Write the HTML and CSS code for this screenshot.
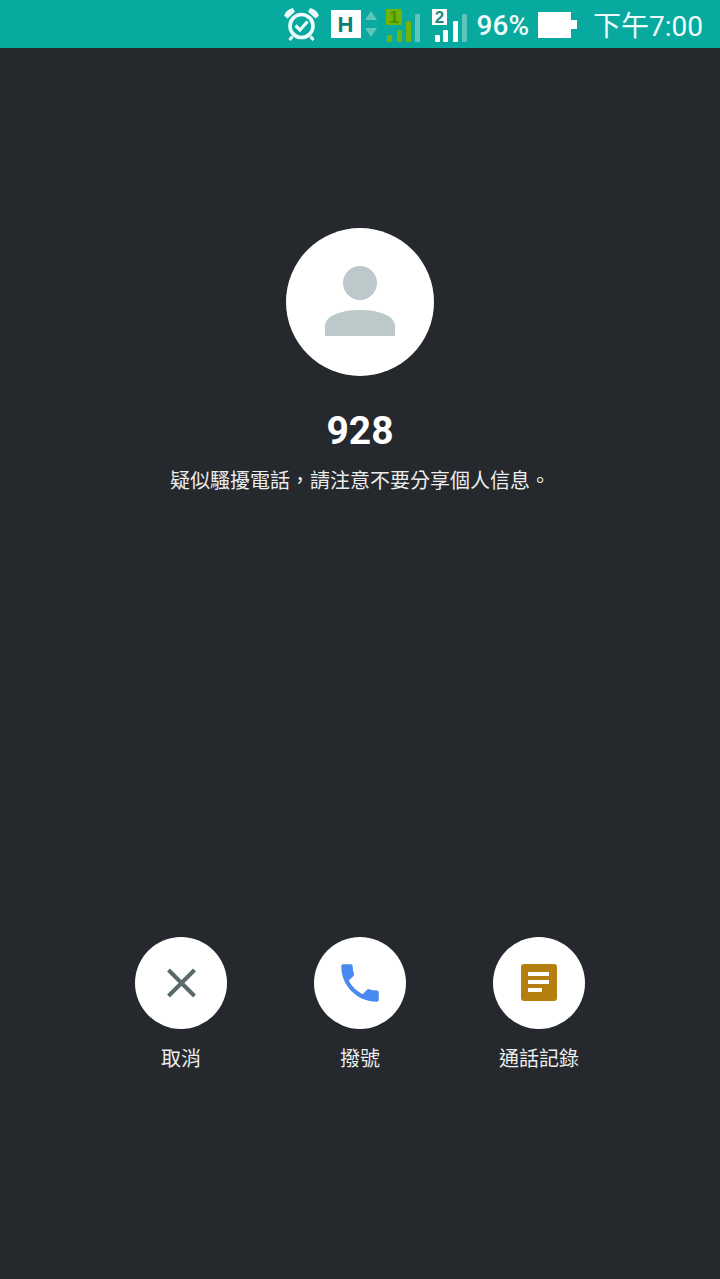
FILE: index.html
```html
<!DOCTYPE html>
<html lang="zh-Hant">
<head>
    <meta charset="UTF-8">
    <meta name="viewport" content="width=device-width, initial-scale=1.0">
    <title>疑似騷擾電話</title>
    <link rel="stylesheet" href="styles.css">
</head>
<body>
    <header class="status-bar">
        <svg class="icon-alarm" width="36" height="36" viewBox="0 0 36 36">
            <circle cx="18.500" cy="20" r="11.500" fill="none" stroke="#eefcfb" stroke-width="3.600"/>
            <path d="M2 9.500C3 6.500 6 4 9.500 3L11 5.500 4.500 11.500Z M35 9.500C34 6.500 31 4 27.500 3L26 5.500 32.500 11.500Z" fill="#eefcfb" stroke="#eefcfb" stroke-width="1.500"/>
            <path d="M9.500 30.500 6.500 34 M27.500 30.500 30.500 34" stroke="#eefcfb" stroke-width="3" fill="none"/>
            <path d="M12.500 19.500 17 24 24.500 15.500" stroke="#eefcfb" stroke-width="3.200" fill="none"/>
        </svg>
        <span class="net-type">H</span>
        <svg class="icon-arrows" width="14" height="28" viewBox="0 0 14 28">
            <path d="M7 1 13 10H1Z M7 27 1 18H13Z" fill="#5cc6bd"/>
        </svg>
        <svg class="icon-sim" width="36" height="36" viewBox="0 0 36 36">
            <rect x="1" y="3" width="16" height="16" fill="#6fb30b"/>
            <text x="9" y="17" class="sim-num sim-num-green">1</text>
            <rect x="2" y="29" width="5" height="7" rx="1" fill="#6fb30b"/>
            <rect x="12" y="24" width="5" height="12" rx="1" fill="#6fb30b"/>
            <rect x="21" y="15" width="5" height="21" rx="1" fill="#6fb30b"/>
            <rect x="30" y="8" width="5" height="28" rx="1" fill="#5cc6bd"/>
        </svg>
        <svg class="icon-sim icon-sim-last" width="37" height="36" viewBox="0 0 37 36">
            <rect x="1" y="3" width="15" height="16" fill="#fff"/>
            <text x="8.500" y="17" class="sim-num">2</text>
            <rect x="4" y="29" width="5" height="7" rx="1" fill="#fff"/>
            <rect x="12" y="24" width="5" height="12" rx="1" fill="#fff"/>
            <rect x="22" y="15" width="5" height="21" rx="1" fill="#fff"/>
            <rect x="31" y="8" width="5" height="28" rx="1" fill="#5cc6bd"/>
        </svg>
        <span class="battery-text">96%</span>
        <svg class="icon-battery" width="40" height="28" viewBox="0 0 40 28">
            <path d="M1 2H34V10H40V19H34V28H1Z" fill="#fff"/>
        </svg>
        <span class="clock">下午7:00</span>
    </header>

    <main class="caller">
        <div class="avatar">
            <svg width="72" height="72" viewBox="0 0 72 72">
                <circle cx="36" cy="17" r="17" fill="#bcc8c9"/>
                <path d="M1 70V60C1 50 17 44 36 44S71 50 71 60V70Z" fill="#bcc8c9"/>
            </svg>
        </div>
        <h1 class="number">928</h1>
        <p class="notice">疑似騷擾電話，請注意不要分享個人信息。</p>
    </main>

    <nav class="actions">
        <div class="action">
            <div class="action-btn">
                <svg width="32" height="32" viewBox="0 0 32 32">
                    <path d="M3.500 3 29.500 29 M29.500 3 3.500 29" stroke="#5a6a6c" stroke-width="4" fill="none"/>
                </svg>
            </div>
            <span class="action-label">取消</span>
        </div>
        <div class="action">
            <div class="action-btn">
                <svg width="50" height="50" viewBox="0 0 24 24">
                    <path d="M6.600 10.800c1.400 2.800 3.800 5.100 6.600 6.600l2.200-2.200c.3-.3.7-.4 1-.2 1.100.4 2.300.6 3.600.6.600 0 1 .4 1 1V20c0 .6-.4 1-1 1C10.600 21 3 13.400 3 4c0-.6.4-1 1-1h3.500c.6 0 1 .4 1 1 0 1.300.2 2.500.6 3.600.1.3 0 .7-.2 1z" fill="#4a8af0"/>
                </svg>
            </div>
            <span class="action-label">撥號</span>
        </div>
        <div class="action">
            <div class="action-btn">
                <svg width="38" height="38" viewBox="0 0 38 38">
                    <rect x="1" y="0" width="36" height="37" rx="3" fill="#b47f0f"/>
                    <path d="M8 8H29V12H8Z M8 16H29V20H8Z M8 24H22V28H8Z" fill="#fff"/>
                </svg>
            </div>
            <span class="action-label">通話記錄</span>
        </div>
    </nav>
</body>
</html>
```

FILE: styles.css
```css
* {
    box-sizing: border-box;
}
body {
    margin: 0;
    height: 1279px;
    overflow: hidden;
    background-color: #25282d;
    color: #fff;
    font-family: "Noto Sans CJK TC", "Noto Sans", sans-serif;
    display: flex;
    flex-direction: column;
}
.status-bar {
    height: 48px;
    background-color: #08a99e;
    display: flex;
    align-items: center;
    justify-content: flex-end;
    padding-right: 17px;
    color: #eefcfb;
}
.icon-alarm {
    margin-right: 12px;
}
.net-type {
    width: 30px;
    height: 28px;
    background: #fff;
    color: #0b7f78;
    font-family: "Liberation Sans", sans-serif;
    font-weight: 700;
    font-size: 22px;
    line-height: 29px;
    text-align: center;
}
.icon-arrows {
    margin: 0 7px 0 3px;
}
.icon-sim {
    margin-right: 10px;
}
.icon-sim-last {
    margin-right: 9px;
}
.sim-num {
    font-family: "Liberation Sans", sans-serif;
    font-size: 17px;
    font-weight: 700;
    text-anchor: middle;
    fill: #1a8a82;
}
.sim-num-green {
    fill: #4b8f00;
}
.battery-text {
    font-family: Roboto, sans-serif;
    font-weight: 500;
    font-size: 28px;
    line-height: 48px;
    margin: 3px 8px 0 0;
}
.icon-battery {
    margin-right: 16px;
}
.clock {
    font-family: Roboto, "Noto Sans CJK TC", sans-serif;
    font-size: 28px;
    line-height: 48px;
    margin-top: 6px;
}
.caller {
    padding-top: 180px;
    display: flex;
    flex-direction: column;
    align-items: center;
}
.avatar {
    width: 148px;
    height: 148px;
    border-radius: 50%;
    background: #fff;
    display: flex;
    align-items: center;
    justify-content: center;
}
.number {
    margin: 27px 0 0;
    font-family: Roboto, sans-serif;
    font-size: 39px;
    font-weight: 700;
    line-height: 56px;
}
.notice {
    margin: 5px 0 0;
    font-size: 20px;
    line-height: 32px;
    color: #eceded;
}
.actions {
    margin-top: 441px;
    display: grid;
    grid-template-columns: repeat(3, 179px);
    justify-content: center;
}
.action {
    display: flex;
    flex-direction: column;
    align-items: center;
}
.action-btn {
    width: 92px;
    height: 92px;
    border-radius: 50%;
    background: #fff;
    display: flex;
    align-items: center;
    justify-content: center;
}
.action-label {
    margin-top: 14px;
    font-size: 20px;
    line-height: 30px;
    color: #eceded;
}
```
